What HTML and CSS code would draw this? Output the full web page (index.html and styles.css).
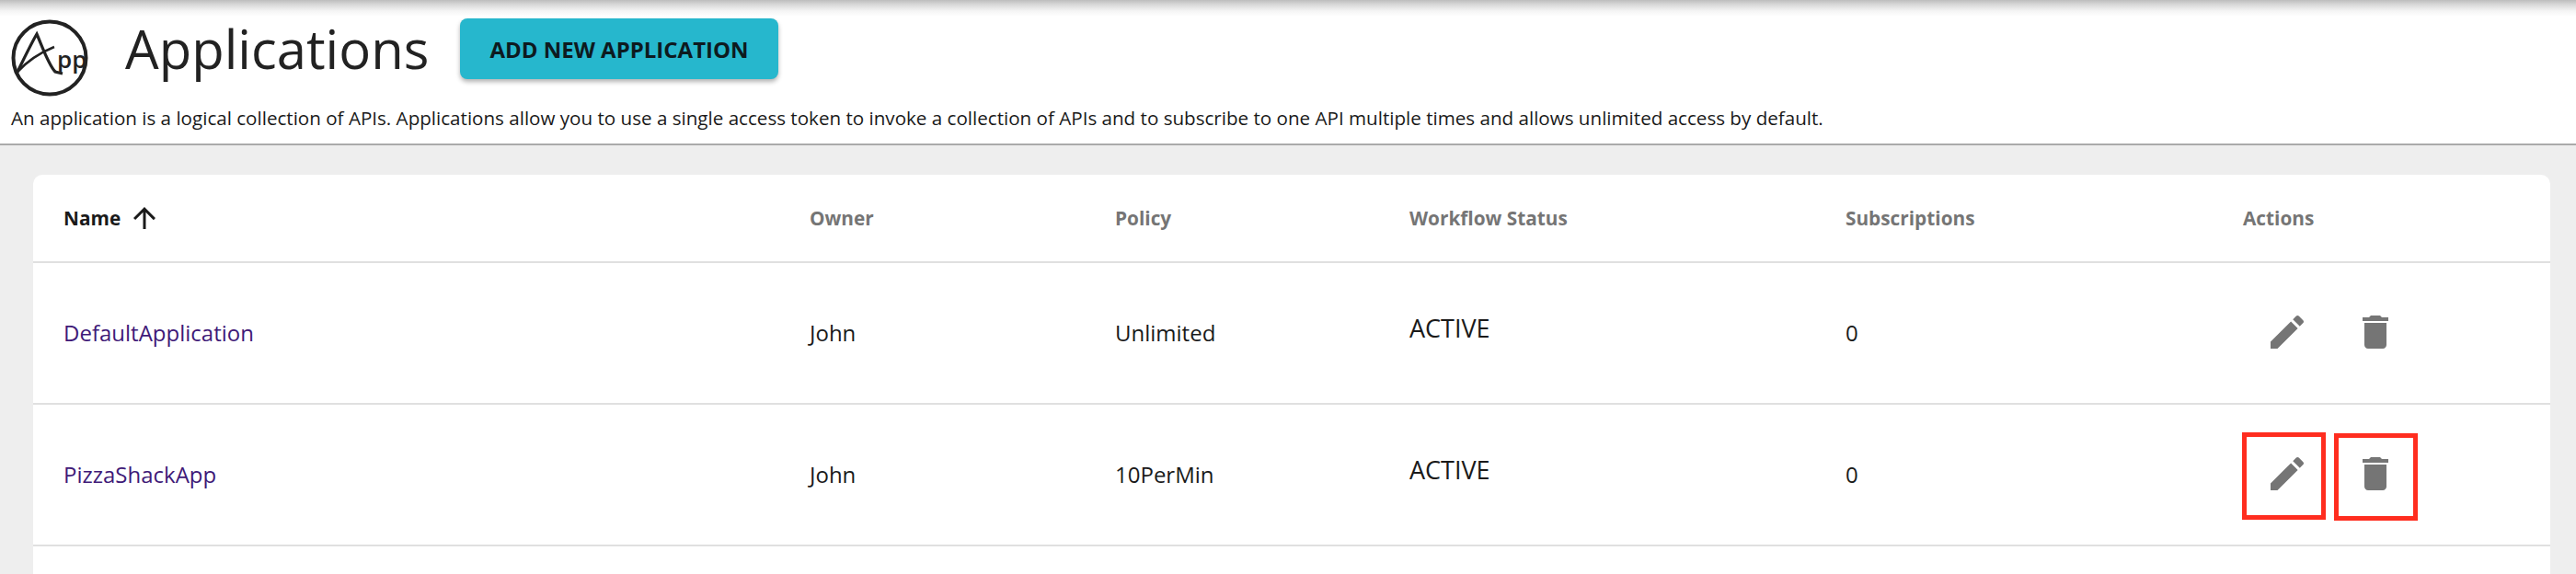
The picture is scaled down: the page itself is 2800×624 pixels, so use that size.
FILE: index.html
```html
<!DOCTYPE html>
<html>
<head>
    <title>Applications</title>
    <link rel="stylesheet" href="styles.css">
</head>
<body>
    <header class="page-header">
        <div class="title-row">
            <svg class="logo" viewBox="0 0 84 84" width="84" height="84">
                <circle cx="42" cy="42" r="39.5" fill="none" stroke="#222" stroke-width="4"/>
                <path d="M6 59C14 43 21 28 28 16C34 30 41 50 48 57L56 59" fill="none" stroke="#222" stroke-width="3.2"/>
                <path d="M6 58C18 45 32 36 47 30" fill="none" stroke="#222" stroke-width="2.6"/>
                <text class="logo-text" x="50" y="53">pp</text>
            </svg>
            <h1>Applications</h1>
            <button type="button" class="add-button">ADD NEW APPLICATION</button>
        </div>
        <p class="intro">An application is a logical collection of APIs. Applications allow you to use a single access token to invoke a collection of APIs and to subscribe to one API multiple times and allows unlimited access by default.</p>
    </header>

    <main class="content">
        <div class="card">
            <table>
                <colgroup>
                    <col class="col-name">
                    <col class="col-owner">
                    <col class="col-policy">
                    <col class="col-status">
                    <col class="col-subs">
                    <col>
                </colgroup>
                <thead>
                    <tr>
                        <th class="first sorted">
                            <span class="sort-label">Name
                                <svg viewBox="0 0 24 24" width="36" height="36"><path d="M4 12l1.41 1.41L11 7.83V20h2V7.83l5.58 5.59L20 12l-8-8-8 8z"/></svg>
                            </span>
                        </th>
                        <th>Owner</th>
                        <th>Policy</th>
                        <th>Workflow Status</th>
                        <th>Subscriptions</th>
                        <th>Actions</th>
                    </tr>
                </thead>
                <tbody>
                    <tr>
                        <td class="first"><a href="#">DefaultApplication</a></td>
                        <td>John</td>
                        <td>Unlimited</td>
                        <td class="status">ACTIVE</td>
                        <td>0</td>
                        <td>
                            <div class="actions">
                                <svg viewBox="0 0 24 24" width="48" height="48"><path d="M3 17.25V21h3.75L17.81 9.94l-3.75-3.75L3 17.25zM20.71 7.04c.39-.39.39-1.02 0-1.41l-2.34-2.34c-.39-.39-1.02-.39-1.41 0l-1.83 1.83 3.75 3.75 1.83-1.83z"/></svg>
                                <svg viewBox="0 0 24 24" width="48" height="48"><path d="M6 19c0 1.1.9 2 2 2h8c1.1 0 2-.9 2-2V7H6v12zM19 4h-3.5l-1-1h-5l-1 1H5v2h14V4z"/></svg>
                            </div>
                        </td>
                    </tr>
                    <tr>
                        <td class="first"><a href="#">PizzaShackApp</a></td>
                        <td>John</td>
                        <td>10PerMin</td>
                        <td class="status">ACTIVE</td>
                        <td>0</td>
                        <td>
                            <div class="actions">
                                <svg viewBox="0 0 24 24" width="48" height="48"><path d="M3 17.25V21h3.75L17.81 9.94l-3.75-3.75L3 17.25zM20.71 7.04c.39-.39.39-1.02 0-1.41l-2.34-2.34c-.39-.39-1.02-.39-1.41 0l-1.83 1.83 3.75 3.75 1.83-1.83z"/></svg>
                                <svg viewBox="0 0 24 24" width="48" height="48"><path d="M6 19c0 1.1.9 2 2 2h8c1.1 0 2-.9 2-2V7H6v12zM19 4h-3.5l-1-1h-5l-1 1H5v2h14V4z"/></svg>
                                <span class="mark mark-edit"></span>
                                <span class="mark mark-delete"></span>
                            </div>
                        </td>
                    </tr>
                </tbody>
            </table>
        </div>
    </main>
</body>
</html>
```

FILE: styles.css
```css
body {
    margin: 0;
    height: 624px;
    overflow: hidden;
    display: flex;
    flex-direction: column;
    font-family: "Open Sans", sans-serif;
    background-color: #eee;
    color: #1a1a1a;
}

/* Cabecalho */
.page-header {
    flex: none;
    height: 156px;
    background: linear-gradient(#bdbdbd 0, #d8d8d8 5px, #f5f5f5 12px, #fff 18px);
    border-bottom: 2px solid #aaa;
    padding: 0 12px;
}

.title-row {
    display: flex;
    align-items: flex-start;
    padding-top: 20px;
}

.logo {
    margin-top: 1px;
    flex: none;
}

.logo-text {
    font-family: "Open Sans", sans-serif;
    font-size: 26px;
    font-weight: 600;
    fill: #222;
}

h1 {
    width: 330px;
    margin: 0 0 0 40px;
    font-size: 58px;
    font-weight: 400;
    line-height: 66px;
    color: #222;
    white-space: nowrap;
}

.add-button {
    margin-left: 34px;
    width: 346px;
    height: 66px;
    border: none;
    border-radius: 8px;
    background-color: #26b7cd;
    color: #0d1a1f;
    font-family: inherit;
    font-size: 24px;
    font-weight: 700;
    box-shadow: 0 3px 5px rgba(0, 0, 0, 0.3);
}

.intro {
    margin: 8px 0 0;
    font-size: 20.6px;
    line-height: 30px;
    white-space: nowrap;
}

/* Tabela */
.content {
    flex: 1;
    padding: 32px 28px 0 36px;
    min-height: 0;
}

.card {
    height: 100%;
    background-color: #fff;
    border-radius: 10px 10px 0 0;
}

table {
    width: 100%;
    table-layout: fixed;
    border-collapse: collapse;
}

.col-name { width: 844px; }
.col-owner { width: 332px; }
.col-policy { width: 320px; }
.col-status { width: 474px; }
.col-subs { width: 432px; }

th, td {
    box-sizing: border-box;
    padding: 0;
    border-bottom: 2px solid #e0e0e0;
}

th {
    height: 95px;
    text-align: left;
    font-size: 20.8px;
    font-weight: 700;
    color: #757575;
}

td {
    height: 154px;
    padding-bottom: 2px;
    font-size: 24px;
}

th.first, td.first {
    padding-left: 33px;
}

th.sorted {
    color: #1a1a1a;
}

.sort-label {
    display: flex;
    align-items: center;
    gap: 8px;
}

.sort-label svg {
    fill: #1a1a1a;
}

a {
    color: #3f1a78;
    text-decoration: none;
}

td.status {
    font-size: 27px;
    padding-bottom: 12px;
}

.actions {
    position: relative;
    display: flex;
    gap: 48px;
    padding-left: 24px;
}

.actions svg {
    fill: #757575;
}

/* Marcacoes vermelhas sobre os icones */
.mark {
    position: absolute;
    box-sizing: border-box;
    width: 91px;
    height: 95px;
    border: 5px solid #ff2d1f;
}

.mark-edit {
    left: -1px;
    top: -21px;
}

.mark-delete {
    left: 99px;
    top: -20px;
}
```
